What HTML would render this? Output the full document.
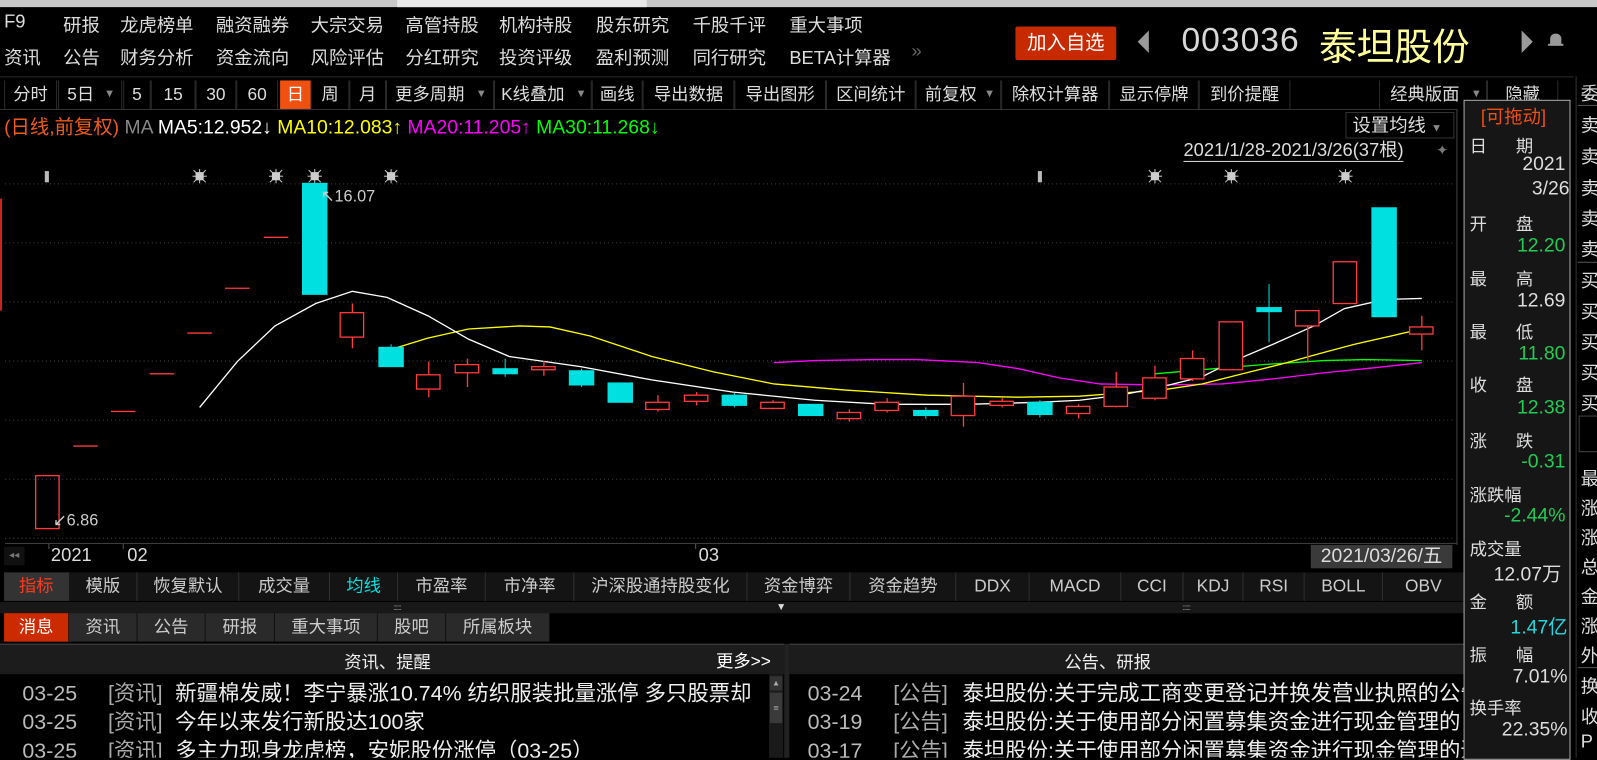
<!DOCTYPE html>
<html><head><meta charset="utf-8"><style>
*{margin:0;padding:0;box-sizing:border-box}
html,body{width:1597px;height:758px;overflow:hidden;background:#000}
#w{position:absolute;left:0;top:0;width:1568px;height:744px;transform:scale(1.01849);transform-origin:0 0;font-family:"Liberation Sans","Noto Sans CJK SC",sans-serif;color:#ddd;font-size:18px}
.a{position:absolute;white-space:nowrap}
.tb{position:absolute;top:79px;height:28px;line-height:27px;border-left:1px solid #2a2a2a;border-right:1px solid #2a2a2a;text-align:center;color:#ddd;font-size:17px}
.it{position:absolute;top:562px;height:28px;line-height:28px;background:#141414;border-right:1px solid #333;text-align:center;font-size:17px;color:#ccc}
.mt{position:absolute;top:602px;height:28px;line-height:28px;background:#2a2a2a;border-right:1px solid #111;text-align:center;font-size:17px;color:#ccc}
.pl{position:absolute;left:5px;font-size:17px;color:#ddd;white-space:nowrap}
.pv{position:absolute;right:4px;font-size:19px;white-space:nowrap}
.fr{position:absolute;left:1552px;font-size:18px;color:#ddd}
.nr{position:absolute;font-size:21px;line-height:26px;height:26px;white-space:nowrap;color:#eee}
.d{color:#bbb}.t{color:#aaa}
</style></head><body><div id="w">
<div class="a" style="left:0;top:0;width:1568px;height:7px;background:#c8c8c8"></div>
<div class="a" style="left:390px;top:0;width:245px;height:7px;background:#e8e8e8"></div>
<div class="a" style="top:11px;left:4px">F9</div>
<div class="a" style="top:11px;left:62px">研报</div>
<div class="a" style="top:11px;left:118px">龙虎榜单</div>
<div class="a" style="top:11px;left:212px">融资融券</div>
<div class="a" style="top:11px;left:305px">大宗交易</div>
<div class="a" style="top:11px;left:398px">高管持股</div>
<div class="a" style="top:11px;left:490px">机构持股</div>
<div class="a" style="top:11px;left:585px">股东研究</div>
<div class="a" style="top:11px;left:680px">千股千评</div>
<div class="a" style="top:11px;left:775px">重大事项</div>
<div class="a" style="top:43px;left:4px">资讯</div>
<div class="a" style="top:43px;left:62px">公告</div>
<div class="a" style="top:43px;left:118px">财务分析</div>
<div class="a" style="top:43px;left:212px">资金流向</div>
<div class="a" style="top:43px;left:305px">风险评估</div>
<div class="a" style="top:43px;left:398px">分红研究</div>
<div class="a" style="top:43px;left:490px">投资评级</div>
<div class="a" style="top:43px;left:585px">盈利预测</div>
<div class="a" style="top:43px;left:680px">同行研究</div>
<div class="a" style="top:43px;left:775px">BETA计算器</div>
<div class="a" style="top:40px;left:895px;color:#666;font-size:18px">»</div>
<div class="a" style="left:997px;top:26px;width:99px;height:33px;background:#c82a00;border-radius:2px;color:#fff;font-size:19px;line-height:33px;text-align:center">加入自选</div>
<div class="a" style="left:1117px;top:30px;width:0;height:0;border-top:11px solid transparent;border-bottom:11px solid transparent;border-right:11px solid #999"></div>
<div class="a" style="left:1160px;top:20px;font-size:33px;color:#d8d8d8;letter-spacing:1px">003036</div>
<div class="a" style="left:1295px;top:16px;font-size:37px;color:#ffff99">泰坦股份</div>
<div class="a" style="left:1494px;top:30px;width:0;height:0;border-top:11px solid transparent;border-bottom:11px solid transparent;border-left:11px solid #999"></div>
<div class="a" style="left:1522px;top:33px;width:11px;height:11px;background:#999;border-radius:5px 5px 1px 1px"></div>
<div class="a" style="left:1520px;top:43px;width:15px;height:2px;background:#999"></div>
<div class="a" style="left:0;top:75px;width:1568px;height:1px;background:#2a2a2a"></div>
<div class="tb" style="left:4px;width:52px">分时</div>
<div class="tb" style="left:57px;width:63px;text-align:left;padding-left:8px">5日<span style="color:#888;font-size:11px;position:absolute;right:6px">▼</span></div>
<div class="tb" style="left:121px;width:27px">5</div>
<div class="tb" style="left:148px;width:44px">15</div>
<div class="tb" style="left:192px;width:40px">30</div>
<div class="tb" style="left:232px;width:41px">60</div>
<div class="tb" style="left:275px;width:30px;background:#f05010;color:#fff;border:none">日</div>
<div class="tb" style="left:305px;width:38px">周</div>
<div class="tb" style="left:343px;width:36px">月</div>
<div class="tb" style="left:379px;width:106px;text-align:left;padding-left:8px">更多周期<span style="color:#888;font-size:11px;position:absolute;right:6px">▼</span></div>
<div class="tb" style="left:485px;width:96px;text-align:left;padding-left:6px">K线叠加<span style="color:#888;font-size:11px;position:absolute;right:4px">▼</span></div>
<div class="tb" style="left:581px;width:50px">画线</div>
<div class="tb" style="left:631px;width:90px">导出数据</div>
<div class="tb" style="left:721px;width:90px">导出图形</div>
<div class="tb" style="left:811px;width:88px">区间统计</div>
<div class="tb" style="left:899px;width:84px;text-align:left;padding-left:8px">前复权<span style="color:#888;font-size:11px;position:absolute;right:5px">▼</span></div>
<div class="tb" style="left:983px;width:106px">除权计算器</div>
<div class="tb" style="left:1089px;width:88px">显示停牌</div>
<div class="tb" style="left:1177px;width:90px">到价提醒</div>
<div class="tb" style="left:1354px;width:106px;text-align:left;padding-left:10px">经典版面<span style="color:#888;font-size:11px;position:absolute;right:4px">▼</span></div>
<div class="tb" style="left:1460px;width:70px">隐藏</div>
<div class="a" style="left:0;top:107px;width:1430px;height:1px;background:#333"></div>
<div class="a" style="left:4px;top:110px;font-size:19px"><span style="color:#f05a1a">(日线,前复权)</span> <span style="color:#888">MA</span> <span style="color:#fff">MA5:12.952↓</span> <span style="color:#ffff00">MA10:12.083↑</span> <span style="color:#ff00ff">MA20:11.205↑</span> <span style="color:#00ff00">MA30:11.268↓</span></div>
<div class="a" style="left:1321px;top:110px;width:107px;height:26px;border:1px solid #333;line-height:24px;padding-left:6px;font-size:18px">设置均线 <span style="color:#888;font-size:11px">▼</span></div>
<div class="a" style="left:1162px;top:137px;font-size:18px;border-bottom:1px solid #ddd;line-height:21px">2021/1/28-2021/3/26(37根)</div>
<div class="a" style="left:1410px;top:139px;color:#777;font-size:14px">✦</div>
<div class="a" style="left:0;top:195px;width:2px;height:110px;background:#c22"></div>
<svg class="a" style="left:0;top:0" width="1568" height="744" xmlns="http://www.w3.org/2000/svg">
<g stroke="#444" stroke-dasharray="1 3" stroke-width="1">
<line x1="5" y1="180.5" x2="1428" y2="180.5"/><line x1="5" y1="238.5" x2="1428" y2="238.5"/><line x1="5" y1="296.5" x2="1428" y2="296.5"/><line x1="5" y1="354.5" x2="1428" y2="354.5"/><line x1="5" y1="412.5" x2="1428" y2="412.5"/><line x1="5" y1="470.5" x2="1428" y2="470.5"/><line x1="5" y1="528.5" x2="1428" y2="528.5"/>
</g>
<line x1="1430.5" y1="107" x2="1430.5" y2="535" stroke="#444"/>
<line x1="5" y1="533.5" x2="1430" y2="533.5" stroke="#444"/>
<g fill="#bbb"><rect x="44" y="168" width="4" height="11"/><rect x="1019" y="168" width="4" height="11"/></g>
<defs><g id="s"><rect x="-4" y="-4" width="8" height="8" fill="#ccc"/><g stroke="#ccc" stroke-width="1"><line x1="-6" y1="-6" x2="6" y2="6"/><line x1="-6" y1="6" x2="6" y2="-6"/><line x1="0" y1="-7" x2="0" y2="7"/><line x1="-7" y1="0" x2="7" y2="0"/></g></g></defs>
<use href="#s" x="196" y="173"/><use href="#s" x="271" y="173"/><use href="#s" x="309" y="173"/><use href="#s" x="384" y="173"/><use href="#s" x="1134" y="173"/><use href="#s" x="1209" y="173"/><use href="#s" x="1321" y="173"/>
<polyline fill="none" stroke="#ff00ff" stroke-width="1.3" points="760,356 800,354 860,353 900,353 960,356 1000,362 1040,371 1080,377 1140,378 1200,377 1250,372 1300,366 1350,361 1396,356"/>
<polyline fill="none" stroke="#00ff00" stroke-width="1.3" points="1134,367 1180,363 1240,358 1300,354 1340,353 1396,354"/>
<polyline fill="none" stroke="#ffff00" stroke-width="1.3" points="384,343 420,332 460,323 510,320 540,321 580,330 640,350 700,365 760,377 830,383 910,388 1000,390 1060,389 1100,386 1140,383 1180,377 1220,367 1260,357 1300,346 1330,338 1396,323"/>
<polyline fill="none" stroke="#fff" stroke-width="1.3" points="196,400 233,355 270,320 310,298 346,286 380,292 420,310 460,333 500,350 570,360 640,373 720,385 800,393 870,397 950,397 1020,395 1060,393 1100,388 1140,380 1180,370 1210,355 1250,338 1290,320 1320,303 1360,294 1396,293"/>
<g stroke="#ff3b3b" stroke-width="1.3" fill="none">
<rect x="35" y="467" width="23" height="52"/>
<line x1="72" y1="438" x2="96" y2="438"/><line x1="109" y1="404" x2="133" y2="404"/><line x1="147" y1="367" x2="171" y2="367"/><line x1="184" y1="327" x2="208" y2="327"/><line x1="221" y1="283" x2="245" y2="283"/><line x1="259" y1="233" x2="283" y2="233"/>
<line x1="346" y1="298" x2="346" y2="342"/><rect x="334" y="307" width="23" height="24" fill="#000"/>
<line x1="421" y1="355" x2="421" y2="390"/><rect x="409" y="368" width="23" height="14" fill="#000"/>
<line x1="459" y1="352" x2="459" y2="380"/><rect x="447" y="358" width="23" height="8" fill="#000"/>
<line x1="534" y1="354" x2="534" y2="369"/><rect x="522" y="360" width="23" height="3" fill="#000"/>
<line x1="646" y1="388" x2="646" y2="404"/><rect x="634" y="395" width="23" height="7" fill="#000"/>
<line x1="684" y1="385" x2="684" y2="398"/><rect x="672" y="388" width="23" height="6" fill="#000"/>
<line x1="759" y1="393" x2="759" y2="402"/><rect x="747" y="395" width="23" height="6" fill="#000"/>
<line x1="834" y1="402" x2="834" y2="414"/><rect x="822" y="405" width="23" height="6" fill="#000"/>
<line x1="871" y1="391" x2="871" y2="405"/><rect x="859" y="395" width="23" height="8" fill="#000"/>
<line x1="946" y1="376" x2="946" y2="419"/><rect x="934" y="389" width="23" height="19" fill="#000"/>
<line x1="984" y1="391" x2="984" y2="400"/><rect x="972" y="394" width="23" height="4" fill="#000"/>
<line x1="1059" y1="397" x2="1059" y2="411"/><rect x="1047" y="399" width="23" height="7" fill="#000"/>
<line x1="1096" y1="365" x2="1096" y2="400"/><rect x="1084" y="380" width="23" height="19" fill="#000"/>
<line x1="1134" y1="359" x2="1134" y2="393"/><rect x="1122" y="371" width="23" height="20" fill="#000"/>
<line x1="1171" y1="344" x2="1171" y2="374"/><rect x="1159" y="352" width="23" height="20" fill="#000"/>
<rect x="1197" y="316" width="23" height="47" fill="#000"/>
<line x1="1284" y1="305" x2="1284" y2="356"/><rect x="1272" y="305" width="23" height="15" fill="#000"/>
<rect x="1309" y="257" width="23" height="41" fill="#000"/>
<line x1="1396" y1="310" x2="1396" y2="344"/><rect x="1384" y="321" width="23" height="7" fill="#000"/>
</g>
<g fill="#00e0e0" stroke="#00e0e0" stroke-width="1">
<rect x="297" y="180" width="24" height="109"/>
<line x1="384" y1="338" x2="384" y2="341"/><rect x="372" y="341" width="24" height="19"/>
<line x1="496" y1="352" x2="496" y2="370"/><rect x="484" y="362" width="24" height="5"/>
<line x1="571" y1="362" x2="571" y2="380"/><rect x="559" y="364" width="24" height="14"/>
<rect x="597" y="376" width="24" height="19"/>
<line x1="721" y1="386" x2="721" y2="400"/><rect x="709" y="388" width="24" height="10"/>
<rect x="784" y="397" width="24" height="11"/>
<line x1="909" y1="400" x2="909" y2="411"/><rect x="897" y="403" width="24" height="5"/>
<line x1="1021" y1="393" x2="1021" y2="410"/><rect x="1009" y="395" width="24" height="12"/>
<line x1="1246" y1="279" x2="1246" y2="336"/><rect x="1234" y="302" width="24" height="4"/>
<rect x="1347" y="204" width="24" height="107"/>
</g>
<text x="315" y="198" fill="#ccc" font-size="16" font-family="Liberation Sans">↖16.07</text>
<text x="52" y="516" fill="#ccc" font-size="16" font-family="Liberation Sans">↙6.86</text>
<g stroke="#555"><line x1="48" y1="534" x2="48" y2="539"/><line x1="121" y1="534" x2="121" y2="539"/><line x1="683" y1="534" x2="683" y2="539"/></g>
</svg>
<div class="a" style="left:4px;top:537px;width:20px;height:18px;background:#111;color:#777;font-size:10px;line-height:18px;text-align:center">◂◂</div>
<div class="a" style="left:50px;top:535px;font-size:18px;color:#ddd">2021</div>
<div class="a" style="left:125px;top:535px;font-size:18px;color:#ddd">02</div>
<div class="a" style="left:686px;top:535px;font-size:18px;color:#ddd">03</div>
<div class="a" style="left:1287px;top:535px;width:139px;height:23px;background:#3a3a3a;font-size:19px;line-height:23px;text-align:center;color:#ddd">2021/03/26/五</div>
<div class="it" style="left:4px;width:64px;background:#333;color:#ff3a1a">指标</div>
<div class="it" style="left:68px;width:67px">模版</div>
<div class="it" style="left:135px;width:100px">恢复默认</div>
<div class="it" style="left:235px;width:89px">成交量</div>
<div class="it" style="left:324px;width:67px;color:#00e0e0">均线</div>
<div class="it" style="left:391px;width:86px">市盈率</div>
<div class="it" style="left:477px;width:87px">市净率</div>
<div class="it" style="left:564px;width:170px">沪深股通持股变化</div>
<div class="it" style="left:734px;width:101px">资金博弈</div>
<div class="it" style="left:835px;width:104px">资金趋势</div>
<div class="it" style="left:939px;width:72px">DDX</div>
<div class="it" style="left:1011px;width:90px">MACD</div>
<div class="it" style="left:1101px;width:61px">CCI</div>
<div class="it" style="left:1162px;width:59px">KDJ</div>
<div class="it" style="left:1221px;width:60px">RSI</div>
<div class="it" style="left:1281px;width:77px">BOLL</div>
<div class="it" style="left:1358px;width:80px">OBV</div>
<div class="a" style="left:0;top:591px;width:1437px;height:11px;background:#181818"></div>
<div class="a" style="left:386px;top:592px;font-size:8px;color:#999;letter-spacing:-1px">::::::</div>
<div class="a" style="left:1161px;top:592px;font-size:8px;color:#999;letter-spacing:-1px">::::::</div>
<div class="a" style="left:762px;top:591px;font-size:10px;color:#ddd">▼</div>
<div class="mt" style="left:4px;width:64px;background:#cc2a00;color:#fff">消息</div>
<div class="mt" style="left:68px;width:67px">资讯</div>
<div class="mt" style="left:135px;width:67px">公告</div>
<div class="mt" style="left:202px;width:68px">研报</div>
<div class="mt" style="left:270px;width:101px">重大事项</div>
<div class="mt" style="left:371px;width:67px">股吧</div>
<div class="mt" style="left:438px;width:102px">所属板块</div>
<div class="a" style="left:0;top:632px;width:770px;height:30px;background:#1c1c1c;border-top:1px solid #444"></div>
<div class="a" style="left:338px;top:636px;font-size:17px;color:#eee">资讯、提醒</div>
<div class="a" style="left:703px;top:635px;font-size:17px;color:#fff">更多&gt;&gt;</div>
<div class="a" style="left:775px;top:632px;width:680px;height:30px;background:#1c1c1c;border-top:1px solid #444"></div>
<div class="a" style="left:1045px;top:636px;font-size:17px;color:#eee">公告、研报</div>
<div class="a" style="left:0;top:662px;width:755px;height:82px;overflow:hidden">
<div class="nr d" style="left:22px;top:7px">03-25</div><div class="nr t" style="left:106px;top:7px">[资讯]</div><div class="nr" style="left:172px;top:7px">新疆棉发威！李宁暴涨10.74% 纺织服装批量涨停 多只股票却</div>
<div class="nr d" style="left:22px;top:35px">03-25</div><div class="nr t" style="left:106px;top:35px">[资讯]</div><div class="nr" style="left:172px;top:35px">今年以来发行新股达100家</div>
<div class="nr d" style="left:22px;top:63px">03-25</div><div class="nr t" style="left:106px;top:63px">[资讯]</div><div class="nr" style="left:172px;top:63px">多主力现身龙虎榜，安妮股份涨停（03-25）</div>
</div>
<div class="a" style="left:770px;top:632px;width:5px;height:112px;background:#222"></div>
<div class="a" style="left:755px;top:662px;width:14px;height:82px;background:#1a1a1a"></div>
<div class="a" style="left:756px;top:664px;width:12px;height:14px;background:#333;color:#aaa;font-size:8px;text-align:center;line-height:14px">▲</div>
<div class="a" style="left:756px;top:680px;width:12px;height:30px;background:#3a3a3a;color:#aaa;font-size:9px;text-align:center;line-height:30px">≡</div>
<div class="a" style="left:775px;top:662px;width:662px;height:82px;overflow:hidden">
<div class="nr d" style="left:18px;top:7px">03-24</div><div class="nr t" style="left:102px;top:7px">[公告]</div><div class="nr" style="left:170px;top:7px">泰坦股份:关于完成工商变更登记并换发营业执照的公告</div>
<div class="nr d" style="left:18px;top:35px">03-19</div><div class="nr t" style="left:102px;top:35px">[公告]</div><div class="nr" style="left:170px;top:35px">泰坦股份:关于使用部分闲置募集资金进行现金管理的</div>
<div class="nr d" style="left:18px;top:63px">03-17</div><div class="nr t" style="left:102px;top:63px">[公告]</div><div class="nr" style="left:170px;top:63px">泰坦股份:关于使用部分闲置募集资金进行现金管理的进展公告</div>
</div>
<div class="a" style="left:1545px;top:75px;width:23px;height:669px;background:#000"></div>
<div class="a" style="left:1547px;top:75px;width:1px;height:669px;background:#333"></div>
<div class="fr" style="top:78px">委</div>
<div class="a" style="left:1549px;top:103px;width:19px;height:1px;background:#555"></div>
<div class="fr" style="top:109px">卖</div><div class="fr" style="top:140px">卖</div><div class="fr" style="top:171px">卖</div><div class="fr" style="top:201px">卖</div><div class="fr" style="top:231px">卖</div>
<div class="a" style="left:1549px;top:257px;width:19px;height:1px;background:#555"></div>
<div class="fr" style="top:262px">买</div><div class="fr" style="top:292px">买</div><div class="fr" style="top:322px">买</div><div class="fr" style="top:352px">买</div><div class="fr" style="top:382px">买</div>
<div class="a" style="left:1550px;top:408px;width:20px;height:36px;border:1px solid #444"></div>
<div class="fr" style="top:456px">最</div><div class="fr" style="top:485px">涨</div><div class="fr" style="top:514px">涨</div><div class="fr" style="top:543px">总</div><div class="fr" style="top:572px">金</div><div class="fr" style="top:601px">涨</div><div class="fr" style="top:630px">外</div>
<div class="a" style="left:1549px;top:655px;width:19px;height:1px;background:#555"></div>
<div class="fr" style="top:660px">换</div><div class="fr" style="top:690px">收</div><div class="fr" style="top:718px">P</div>
<div class="a" style="left:1437px;top:98px;width:105px;height:648px;background:#161616;border:1px solid #aaa">
<div class="a" style="left:16px;top:2px;font-size:18px;color:#f05010">[可拖动]</div>
<div class="pl" style="top:30px">日&nbsp;&nbsp;&nbsp;&nbsp;&nbsp;&nbsp;期</div>
<div class="pv" style="top:52px;color:#ddd">2021</div>
<div class="pv" style="top:76px;color:#ddd;right:0">3/26</div>
<div class="pl" style="top:107px">开&nbsp;&nbsp;&nbsp;&nbsp;&nbsp;&nbsp;盘</div>
<div class="pv" style="top:132px;color:#22cc55">12.20</div>
<div class="pl" style="top:161px">最&nbsp;&nbsp;&nbsp;&nbsp;&nbsp;&nbsp;高</div>
<div class="pv" style="top:186px;color:#ddd">12.69</div>
<div class="pl" style="top:213px">最&nbsp;&nbsp;&nbsp;&nbsp;&nbsp;&nbsp;低</div>
<div class="pv" style="top:238px;color:#22cc55">11.80</div>
<div class="pl" style="top:265px">收&nbsp;&nbsp;&nbsp;&nbsp;&nbsp;&nbsp;盘</div>
<div class="pv" style="top:291px;color:#22cc55">12.38</div>
<div class="pl" style="top:320px">涨&nbsp;&nbsp;&nbsp;&nbsp;&nbsp;&nbsp;跌</div>
<div class="pv" style="top:344px;color:#22cc55">-0.31</div>
<div class="pl" style="top:373px">涨跌幅</div>
<div class="pv" style="top:397px;color:#22cc55">-2.44%</div>
<div class="pl" style="top:426px">成交量</div>
<div class="pv" style="top:450px;color:#ddd;right:8px">12.07万</div>
<div class="pl" style="top:478px">金&nbsp;&nbsp;&nbsp;&nbsp;&nbsp;&nbsp;额</div>
<div class="pv" style="top:502px;color:#22d8e0;right:2px">1.47亿</div>
<div class="pl" style="top:530px">振&nbsp;&nbsp;&nbsp;&nbsp;&nbsp;&nbsp;幅</div>
<div class="pv" style="top:555px;color:#ddd;right:2px">7.01%</div>
<div class="pl" style="top:582px">换手率</div>
<div class="pv" style="top:607px;color:#ddd;right:2px">22.35%</div>
</div>
</div></body></html>
